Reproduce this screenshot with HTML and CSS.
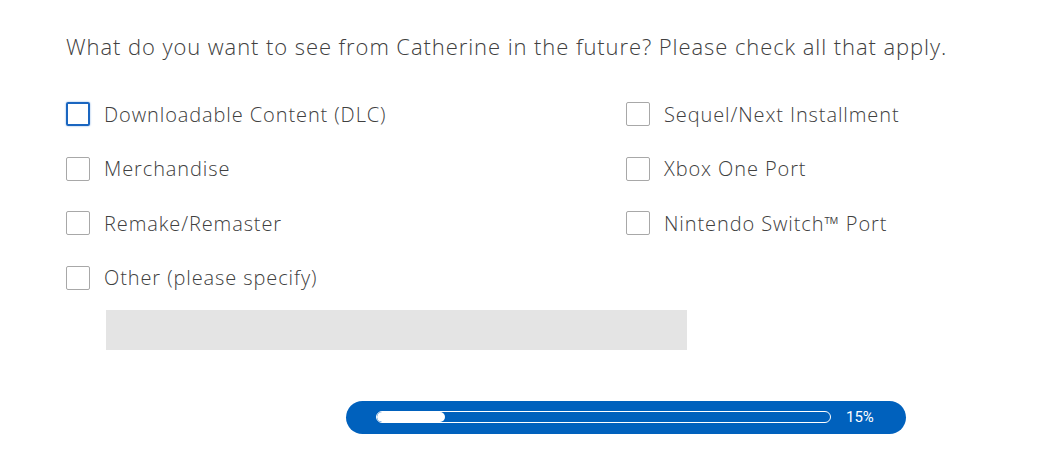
FILE: index.html
```html
<!DOCTYPE html>
<html>
<head>
<meta charset="utf-8">
<link rel="stylesheet" href="styles.css">
</head>
<body>
<div class="page">
  <h2 class="question">What do you want to see from Catherine in the future? Please check all that apply.</h2>
  <div class="options">
    <div class="col">
      <label class="opt"><span class="box focus"></span><span class="lbl">Downloadable Content (DLC)</span></label>
      <label class="opt"><span class="box"></span><span class="lbl">Merchandise</span></label>
      <label class="opt"><span class="box"></span><span class="lbl">Remake/Remaster</span></label>
      <label class="opt"><span class="box"></span><span class="lbl">Other (please specify)</span></label>
    </div>
    <div class="col col2">
      <label class="opt"><span class="box"></span><span class="lbl">Sequel/Next Installment</span></label>
      <label class="opt"><span class="box"></span><span class="lbl">Xbox One Port</span></label>
      <label class="opt"><span class="box"></span><span class="lbl">Nintendo Switch™ Port</span></label>
    </div>
  </div>
  <div class="other-input"></div>
  <div class="progress-wrap">
    <div class="progress">
      <div class="track"><div class="fill" style="width:15%"></div></div>
      <span class="pct">15%</span>
    </div>
  </div>
</div>
</body>
</html>
```
FILE: styles.css
```css
html, body { margin: 0; padding: 0; background: #fff; }
body { font-family: "Open Sans", "Liberation Sans", sans-serif; color: #4a4a4a; }
.page { padding: 30px 0 0 66px; width: 1054px; box-sizing: border-box; }
.question {
  margin: 0;
  font-size: 22px;
  font-weight: 300;
  line-height: 32px;
  color: #404040;
  letter-spacing: 0.92px;
  white-space: nowrap;
}
.options { display: flex; margin-top: 40px; }
.col { display: flex; flex-direction: column; gap: 30.5px; width: 560px; flex: none; }
.col2 { width: auto; flex: 1; }
.opt { display: flex; align-items: center; height: 24px; gap: 14px; }
.box {
  width: 22px; height: 22px;
  border: 1px solid #a8a8a8;
  border-radius: 2px;
  flex: none;
}
.box.focus { border: 2px solid #1a66c0; width: 20px; height: 20px; box-shadow: 0 0 2px #7aa7e0; }
.lbl { font-size: 20px; font-weight: 300; color: #404040; letter-spacing: 0.9px; }
.other-input {
  margin: 20px 0 0 40px;
  width: 581px; height: 40px;
  background: #e4e4e4;
}
.progress-wrap { margin: 51px 0 0 280px; }
.progress {
  width: 560px; height: 33px;
  background: #0061bd;
  border-radius: 17px;
  display: flex; align-items: center;
  box-sizing: border-box;
  padding: 0 30px;
}
.track {
  width: 455px; height: 12px;
  border: 1px solid #fff;
  border-radius: 7px;
  box-sizing: border-box;
  overflow: hidden;
}
.fill { height: 100%; background: #fff; border-radius: 6px; }
.pct { margin-left: 15px; color: #fff; font-size: 15px; font-family: "Roboto", sans-serif; }
```
